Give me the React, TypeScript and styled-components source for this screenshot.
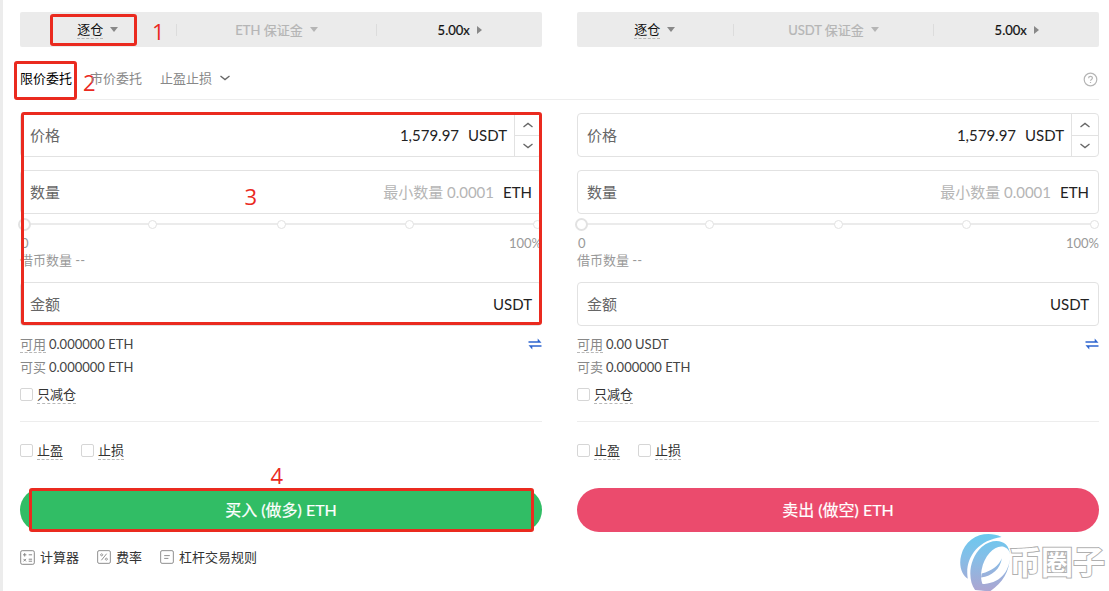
import React from "react";
import styled, { createGlobalStyle, css } from "styled-components";

const GlobalStyle = createGlobalStyle`
  *, *::before, *::after { box-sizing: border-box; }
  body {
    margin: 0;
    background: #fff;
    color: #222;
    font-family: Lato, "Noto Sans CJK SC", sans-serif;
    font-size: 13px;
    line-height: 20px;
  }
  button, input { font: inherit; color: inherit; }
  button { border: 0; padding: 0; background: none; cursor: pointer; }
`;

const Page = styled.main`
  position: relative;
  min-height: 591px;
  padding: 12px 10px 0 17px;
  border-left: 3px solid #ececec;
`;

const Columns = styled.div`
  display: grid;
  grid-template-columns: 1fr 1fr;
  column-gap: 35px;
`;

const MarginBar = styled.div`
  position: relative;
  display: grid;
  grid-template-columns: 31fr 40fr 33fr;
  align-items: center;
  height: 35px;
  border-radius: 2px;
  background: #ebebeb;
`;

const BarItem = styled.button<{ $muted?: boolean; $strong?: boolean }>`
  display: flex;
  align-items: center;
  justify-content: center;
  gap: 7px;
  height: 12px;
  color: ${(p) => (p.$muted ? "#b5b5b5" : "#111")};
  & + & { border-left: 1px solid #dcdcdc; }
  ${(p) => p.$strong && css`-webkit-text-stroke: 0.2px;`}
`;

const Hint = styled.span`
  border-bottom: 1px dashed #b8b8b8;
  line-height: 18px;
`;

const Caret = styled.i<{ $right?: boolean; $muted?: boolean }>`
  border: 4px solid transparent;
  ${(p) =>
    p.$right
      ? css`border-left: 5px solid #888; border-right: 0;`
      : css`border-top: 5px solid ${p.$muted ? "#b5b5b5" : "#888"}; border-bottom: 0;`}
`;

const Tabs = styled.nav`
  display: flex;
  align-items: center;
  gap: 18px;
  height: 53px;
  margin-bottom: 13px;
  border-bottom: 1px solid #ededed;
`;

const Tab = styled.button<{ $active?: boolean }>`
  position: relative;
  display: flex;
  align-items: center;
  gap: 8px;
  align-self: stretch;
  padding-top: 12px;
  color: ${(p) => (p.$active ? "#000" : "#888")};
  border-bottom: 2px solid ${(p) => (p.$active ? "#222" : "transparent")};
`;

const HelpButton = styled.button`
  display: flex;
  margin-left: auto;
  padding: 12px 1px 0 0;
`;

const Fields = styled.div`
  position: relative;
`;

const Field = styled.div<{ $spaced?: boolean }>`
  display: flex;
  align-items: center;
  height: 44px;
  margin-top: ${(p) => (p.$spaced ? 13 : 0)}px;
  border: 1px solid #e2e2e2;
  border-radius: 4px;
  font-size: 15px;
  padding-left: 9px;
`;

const FieldLabel = styled.label`
  flex: none;
  color: #666;
`;

const FieldInput = styled.input`
  flex: 1;
  min-width: 0;
  border: 0;
  padding: 0 9px;
  outline: 0;
  background: none;
  text-align: right;
  &::placeholder { color: #b5b5b5; opacity: 1; }
`;

const Unit = styled.span<{ $tight?: boolean }>`
  padding-right: ${(p) => (p.$tight ? 7 : 9)}px;
`;

const Stepper = styled.div`
  display: grid;
  grid-template-rows: 1fr 1fr;
  align-self: stretch;
  width: 27px;
  border-left: 1px solid #e2e2e2;
`;

const StepButton = styled.button`
  display: grid;
  place-items: center;
  & + & { border-top: 1px solid #e2e2e2; }
`;

const SliderRow = styled.div`
  display: grid;
  align-items: center;
  height: 20px;
  & > * { grid-area: 1 / 1; }
`;

const Stops = styled.div`
  display: flex;
  align-items: center;
  justify-content: space-between;
  background: linear-gradient(#ebebeb, #ebebeb) center / 100% 2px no-repeat;
`;

const Stop = styled.i`
  width: 9px;
  height: 9px;
  border: 1px solid #e2e2e2;
  border-radius: 50%;
  background: #fff;
`;

const Range = styled.input`
  appearance: none;
  height: 13px;
  margin: 0 -2px;
  background: none;
  &::-webkit-slider-thumb {
    appearance: none;
    width: 13px;
    height: 13px;
    border: 2px solid #e2e2e2;
    border-radius: 50%;
    background: #fff;
  }
`;

const Scale = styled.div`
  display: flex;
  justify-content: space-between;
  height: 17px;
  line-height: 18px;
  padding-left: 1px;
  color: #999;
`;

const Borrow = styled.p`
  margin: 0 0 13px;
  line-height: 18px;
  color: #999;
`;

const Balances = styled.dl`
  display: grid;
  gap: 3px;
  margin: 0;
  padding-top: 8px;
`;

const Balance = styled.div`
  display: flex;
  align-items: center;
  gap: 3px;
`;

const Term = styled.dt`
  color: #888;
`;

const Amount = styled.dd`
  margin: 0;
  color: #444;
`;

const SwapButton = styled.button`
  display: flex;
  margin-left: auto;
`;

const Checks = styled.div<{ $divided?: boolean }>`
  display: flex;
  gap: 18px;
  padding-top: 8px;
  ${(p) =>
    p.$divided &&
    css`
      margin-top: 17px;
      padding-top: 19px;
      border-top: 1px solid #ededed;
    `}
`;

const CheckLabel = styled.label`
  display: flex;
  align-items: center;
  gap: 4px;
  color: #333;
`;

const CheckBox = styled.input`
  appearance: none;
  width: 13px;
  height: 13px;
  margin: 0;
  border: 1px solid #d6d6d6;
  border-radius: 2px;
  background: #fff;
`;

const SubmitWrap = styled.div`
  position: relative;
  display: grid;
  margin-top: 28px;
`;

const Submit = styled.button<{ $side: "buy" | "sell" }>`
  height: 44px;
  border-radius: 22px;
  background: ${(p) => (p.$side === "buy" ? "#31bd65" : "#eb4b6d")};
  color: #fff;
  font-size: 16px;
  -webkit-text-stroke: 0.2px;
`;

const Footer = styled.footer`
  display: flex;
  gap: 18px;
  padding-top: 15px;
`;

const FooterLink = styled.a`
  display: flex;
  align-items: center;
  gap: 5px;
  color: #333;
  text-decoration: none;
`;

const Frame = styled.span<{ $inset: string; $width?: string }>`
  position: absolute;
  inset: ${(p) => p.$inset};
  width: ${(p) => p.$width ?? "auto"};
  border: 3px solid #ea2a1f;
  border-radius: 3px;
  pointer-events: none;
`;

const Step = styled.span<{ $left: string; $top: string }>`
  position: absolute;
  left: ${(p) => p.$left};
  top: ${(p) => p.$top};
  color: #ea2a1f;
  font: 22px/24px "Open Sans", sans-serif;
  pointer-events: none;
`;

const Watermark = styled.div`
  position: absolute;
  right: 4px;
  bottom: 0;
  display: flex;
  align-items: center;
`;

const WatermarkText = styled.span`
  margin-left: -2px;
  font-size: 32px;
  line-height: 32px;
  font-weight: 700;
  color: #fff;
  -webkit-text-stroke: 2px #b0b0b0;
  paint-order: stroke fill;
`;

function Chevron({ up }: { up?: boolean }) {
  return (
    <svg width="10" height="6" viewBox="0 0 10 6" fill="none" stroke="#666" strokeWidth="1.3">
      <path d={up ? "M0.500 5 5 1.400 9.500 5" : "M0.500 1 5 4.600 9.500 1"} />
    </svg>
  );
}

function SwapIcon() {
  return (
    <svg width="14" height="12" viewBox="0 0 14 12">
      <path fill="#2f66d0" d="M0.500 3.200H9.700V0.500L13.500 4.800H0.500zM13.500 8.800H4.300V11.500L0.500 7.200H13.500z" />
    </svg>
  );
}

function HelpIcon() {
  return (
    <svg width="15" height="15" viewBox="0 0 15 15" fill="none" stroke="#b5b5b5" strokeWidth="1.2">
      <circle cx="7.5" cy="7.5" r="6.3" />
      <path d="M5.600 6.200c0-2.400 3.800-2.400 3.800-.1 0 1.300-1.900 1.400-1.900 2.700M7.500 9.900v1.200" />
    </svg>
  );
}

const iconPaths = {
  calculator: "M3 4.800h3.400M4.700 3.100v3.400M8.700 4.800h3.400M3.500 8.900l2.500 2.500M6 8.900l-2.500 2.500M8.700 9.200h3.400M8.700 11.200h3.400",
  rate: "M10.300 4 4.700 11M5 4.100a1.100 1.100 0 1 0 .01 0M10 8.700a1.100 1.100 0 1 0 .01 0",
  rules: "M4.500 6h6M4.500 9h4.500",
};

function BoxIcon({ name, size = 14 }: { name: keyof typeof iconPaths; size?: number }) {
  return (
    <svg width={size} height={size} viewBox="0 0 15 15" fill="none" stroke="#888" strokeWidth="1">
      <rect x="0.700" y="0.700" width="13.600" height="13.600" rx="1.500" />
      <path d={iconPaths[name]} />
    </svg>
  );
}

function Logo() {
  return (
    <svg width="52" height="58" viewBox="20 20 156 175">
      <defs>
        <linearGradient id="sky" gradientUnits="userSpaceOnUse" x1="0" y1="25" x2="0" y2="190">
          <stop offset="0" stopColor="#6cc8ee" />
          <stop offset="0.400" stopColor="#84bfe8" />
          <stop offset="1" stopColor="#aaa6d2" />
        </linearGradient>
      </defs>
      <g fill="url(#sky)">
        <path d="M148 32C100 10 40 30 26 88c-8 30 2 58 20 70C36 98 74 42 148 32z" />
        <path d="M173 86C173 42 126 30 88 62 50 96 44 160 68 192l44 4C90 186 82 160 88 130 97 84 130 54 156 62c11 4 17 12 17 24z" />
        <path d="M173 84c2 52-30 90-86 90l-6 17 32 5c38-24 62-62 60-112z" />
        <path d="M149 96c-10 24-30 38-61 46l-2 12c34-4 58-26 63-58z" />
      </g>
    </svg>
  );
}

type Side = {
  id: "buy" | "sell";
  margin: string;
  available: string;
  quotaLabel: string;
  action: string;
};

const buy: Side = { id: "buy", margin: "ETH 保证金", available: "0.000000 ETH", quotaLabel: "可买", action: "买入 (做多) ETH" };
const sell: Side = { id: "sell", margin: "USDT 保证金", available: "0.00 USDT", quotaLabel: "可卖", action: "卖出 (做空) ETH" };

function MarginSelector({ side, children }: { side: Side; children?: React.ReactNode }) {
  return (
    <MarginBar>
      <BarItem><Hint>逐仓</Hint><Caret /></BarItem>
      <BarItem $muted $strong>{side.margin}<Caret $muted /></BarItem>
      <BarItem $strong>5.00x<Caret $right /></BarItem>
      {children}
    </MarginBar>
  );
}

function Check({ label }: { label: string }) {
  return (
    <CheckLabel>
      <CheckBox type="checkbox" />
      <Hint>{label}</Hint>
    </CheckLabel>
  );
}

function OrderForm({ side, guided }: { side: Side; guided?: boolean }) {
  const { id } = side;
  return (
    <form onSubmit={(e) => e.preventDefault()}>
      <Fields>
        <Field>
          <FieldLabel htmlFor={`${id}-price`}>价格</FieldLabel>
          <FieldInput id={`${id}-price`} defaultValue="1,579.97" />
          <Unit $tight>USDT</Unit>
          <Stepper>
            <StepButton type="button" aria-label="+"><Chevron up /></StepButton>
            <StepButton type="button" aria-label="-"><Chevron /></StepButton>
          </Stepper>
        </Field>
        <Field $spaced>
          <FieldLabel htmlFor={`${id}-amount`}>数量</FieldLabel>
          <FieldInput id={`${id}-amount`} placeholder="最小数量 0.0001" />
          <Unit>ETH</Unit>
        </Field>
        <SliderRow>
          <Stops>{[0, 25, 50, 75, 100].map((n) => <Stop key={n} />)}</Stops>
          <Range type="range" min="0" max="100" defaultValue="0" aria-label="数量" />
        </SliderRow>
        <Scale><span>0</span><span>100%</span></Scale>
        <Borrow>借币数量 --</Borrow>
        <Field>
          <FieldLabel htmlFor={`${id}-total`}>金额</FieldLabel>
          <FieldInput id={`${id}-total`} />
          <Unit>USDT</Unit>
        </Field>
        {guided && (
          <>
            <Frame $inset="-1px 0 1px 1px" />
            <Step $left="43%" $top="71px">3</Step>
          </>
        )}
      </Fields>
      <Balances>
        <Balance>
          <Term><Hint>可用</Hint></Term>
          <Amount>{side.available}</Amount>
          <SwapButton type="button" aria-label="划转"><SwapIcon /></SwapButton>
        </Balance>
        <Balance>
          <Term>{side.quotaLabel}</Term>
          <Amount>0.000000 ETH</Amount>
        </Balance>
      </Balances>
      <Checks><Check label="只减仓" /></Checks>
      <Checks $divided><Check label="止盈" /><Check label="止损" /></Checks>
      <SubmitWrap>
        <Submit $side={id}>{side.action}</Submit>
        {guided && (
          <>
            <Frame $inset="0 8px 0 9px" />
            <Step $left="48%" $top="-25px">4</Step>
          </>
        )}
      </SubmitWrap>
    </form>
  );
}

export default function App() {
  return (
    <>
      <GlobalStyle />
      <Page>
        <Columns>
          <MarginSelector side={buy}>
            <Frame $inset="2px auto 1px 30px" $width="87px" />
            <Step $left="132px" $top="7px">1</Step>
          </MarginSelector>
          <MarginSelector side={sell} />
        </Columns>
        <Tabs>
          <Tab $active>
            限价委托
            <Frame $inset="14px -5px -3px -6px" />
            <Step $left="63px" $top="23px">2</Step>
          </Tab>
          <Tab>市价委托</Tab>
          <Tab>止盈止损<Chevron /></Tab>
          <HelpButton aria-label="帮助"><HelpIcon /></HelpButton>
        </Tabs>
        <Columns>
          <OrderForm side={buy} guided />
          <OrderForm side={sell} />
        </Columns>
        <Footer>
          <FooterLink href="#calculator"><BoxIcon name="calculator" size={15} />计算器</FooterLink>
          <FooterLink href="#rate"><BoxIcon name="rate" />费率</FooterLink>
          <FooterLink href="#rules"><BoxIcon name="rules" />杠杆交易规则</FooterLink>
        </Footer>
        <Watermark><Logo /><WatermarkText>币圈子</WatermarkText></Watermark>
      </Page>
    </>
  );
}
